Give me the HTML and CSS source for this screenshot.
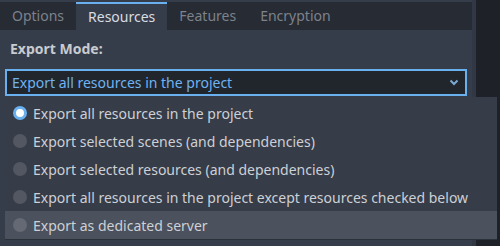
FILE: index.html
```html
<!DOCTYPE html>
<html lang="en">
<head>
  <meta charset="UTF-8">
  <title>Export Mode</title>
  <link rel="stylesheet" href="styles.css">
</head>
<body>
  <div class="window">
    <div class="panel">
      <div class="tabs">
        <div class="tab">Options</div>
        <div class="tab active">Resources</div>
        <div class="tab">Features</div>
        <div class="tab">Encryption</div>
      </div>
      <div class="content">
        <div class="label">Export Mode:</div>
        <div class="option-button">
          <span>Export all resources in the project</span>
          <svg class="chevron" width="10" height="7" viewBox="0 0 10 7">
            <path d="M1.5 1.5 L5 5 L8.5 1.5" fill="none" stroke="#7aa9d4" stroke-width="2"/>
          </svg>
        </div>
      </div>
    </div>
    <div class="side"></div>

    <div class="popup">
      <div class="item"><span class="radio checked"></span>Export all resources in the project</div>
      <div class="item"><span class="radio"></span>Export selected scenes (and dependencies)</div>
      <div class="item"><span class="radio"></span>Export selected resources (and dependencies)</div>
      <div class="item"><span class="radio"></span>Export all resources in the project except resources checked below</div>
      <div class="item hover"><span class="radio"></span>Export as dedicated server</div>
    </div>
  </div>
</body>
</html>
```

FILE: styles.css
```css
body {
  margin: 0;
  background-color: #1e2127;
  font-family: "Noto Sans", sans-serif;
  font-size: 14px;
}
.window {
  position: relative;
  display: flex;
  width: 500px;
  height: 246px;
  overflow: hidden;
}
.panel {
  width: 472px;
  height: 246px;
  background-color: #363d4a;
}
.side {
  width: 4px;
  background-color: #313744;
}
.tabs {
  display: flex;
  margin-top: 2px;
  height: 28px;
  background-color: #262b34;
}
.tab {
  padding: 0 12px;
  line-height: 28px;
  color: #7d828b;
}
.tab.active {
  background-color: #363d4a;
  border-top: 2px solid #6aafee;
  line-height: 26px;
  color: #d9dce1;
}
.content {
  padding: 0 5px;
}
.label {
  padding: 8px 5px 0;
  line-height: 22px;
  font-weight: bold;
  color: #c8cbd0;
}
.option-button {
  display: flex;
  align-items: center;
  justify-content: space-between;
  width: 448px;
  height: 23px;
  margin-top: 9px;
  padding: 0 5px;
  border: 2px solid #6aafee;
  background-color: #21252c;
  color: #6fb3f2;
}
.chevron {
  margin-right: 1px;
}
.popup {
  position: absolute;
  left: 5px;
  top: 97px;
  width: 492px;
  padding: 2px 0 0;
  height: 140px;
  background-color: #363c48;
  border-bottom: 1px solid #2b3039;
}
.item {
  display: flex;
  align-items: center;
  height: 28px;
  padding-left: 8px;
  color: #cdd0d5;
}
.item.hover {
  background-color: #4b515d;
}
.radio {
  width: 14px;
  height: 14px;
  border-radius: 50%;
  margin-right: 6px;
  background-color: rgba(255, 255, 255, 0.14);
  box-sizing: border-box;
}
.radio.checked {
  background-color: #ffffff;
  border: 3px solid #6aafee;
}
```
